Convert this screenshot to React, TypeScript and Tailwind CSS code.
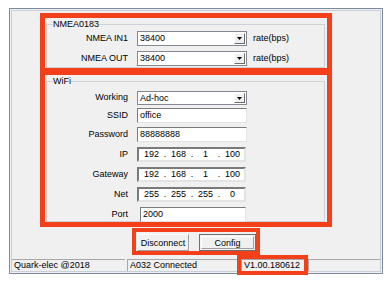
import React from 'react';

const red = 'border-[#f4401a]';

function Combo({ value, w = 'w-[110px]', h = 'h-[15px]' }: { value: string; w?: string; h?: string }) {
	return (
		<div className={`flex ${w} ${h} border border-[#828790] bg-white`}>
			<div className="flex-1 pl-[2px] leading-[13px]">{value}</div>
			<div className="m-px flex w-[11px] items-center justify-center border border-t-white border-l-white border-r-[#6d6d6d] border-b-[#6d6d6d] bg-[#f0f0f0]">
				<svg width="5" height="3" viewBox="0 0 5 3">
					<path d="M0 0h5L2.5 3z" fill="#000" />
				</svg>
			</div>
		</div>
	);
}

function TextBox({ value, w = 'w-[110px]' }: { value: string; w?: string }) {
	return (
		<div className={`${w} h-[15px] border border-t-[#7a7a7a] border-l-[#7a7a7a] border-r-[#e3e3e3] border-b-[#e3e3e3] bg-white pl-[2px] leading-[13px]`}>
			{value}
		</div>
	);
}

function IpBox({ parts }: { parts: string[] }) {
	return (
		<div className="flex h-[15px] w-[109px] border-2 border-t-[#7a7a7a] border-l-[#7a7a7a] border-r-[#e3e3e3] border-b-[#e3e3e3] bg-white pl-[2px] leading-[11px]">
			{parts.map((p, i) => (
				<React.Fragment key={i}>
					{i > 0 && <span className="w-[6px] text-center">.</span>}
					<span className="w-[21px] text-center">{p}</span>
				</React.Fragment>
			))}
		</div>
	);
}

function Row({ label, children, extra }: { label: string; children: React.ReactNode; extra?: React.ReactNode }) {
	return (
		<div className="flex items-center">
			<div className="w-[81px] text-right">{label}</div>
			<div className="ml-[9px]">{children}</div>
			{extra}
		</div>
	);
}

export default function App() {
	return (
		<div className="h-[289px] w-[389px] bg-white pl-[9px] pt-[8px] font-['Liberation_Sans',Arial,sans-serif] text-[9px] text-black">
			<div className="h-[266px] w-[374px] border border-[#7b8a9c] bg-[#f0f0f0] p-px">
				<div className="flex h-full flex-col border border-[#c9cfd6]">
					{/* NMEA0183 */}
					<div className={`ml-[28px] mt-[2px] h-[59px] w-[292px] border-[5px] border-b-4 ${red}`}>
						<fieldset className="ml-px mt-px h-[49px] w-[279px] border border-[#cfd3d7]">
							<legend className="ml-[6px] leading-[11px]">NMEA0183</legend>
							<div className="flex flex-col gap-[5px] pt-px">
								<Row label="NMEA IN1" extra={<span className="ml-[6px]">rate(bps)</span>}>
									<Combo value="38400" />
								</Row>
								<Row label="NMEA OUT" extra={<span className="ml-[6px]">rate(bps)</span>}>
									<Combo value="38400" />
								</Row>
							</div>
						</fieldset>
					</div>

					{/* WiFi */}
					<div className={`ml-[28px] h-[155px] w-[292px] border-[5px] border-t-[3px] ${red}`}>
						<fieldset className="ml-px mt-px h-[146px] w-[279px] border border-[#cfd3d7]">
							<legend className="ml-[6px] leading-[11px]">WiFi</legend>
							<div className="flex flex-col pt-[4px]">
								<Row label="Working">
									<Combo value="Ad-hoc" h="h-[14px]" />
								</Row>
								<div className="mt-[3px]">
									<Row label="SSID">
										<TextBox value="office" />
									</Row>
								</div>
								<div className="mt-[4px]">
									<Row label="Password">
										<TextBox value="88888888" />
									</Row>
								</div>
								<div className="mt-[5px]">
									<Row label="IP">
										<IpBox parts={['192', '168', '1', '100']} />
									</Row>
								</div>
								<div className="mt-[5px]">
									<Row label="Gateway">
										<IpBox parts={['192', '168', '1', '100']} />
									</Row>
								</div>
								<div className="mt-[5px]">
									<Row label="Net">
										<IpBox parts={['255', '255', '255', '0']} />
									</Row>
								</div>
								<div className="mt-[5px]">
									<Row label="Port">
										<div className="ml-[3px]">
											<TextBox value="2000" w="w-[106px]" />
										</div>
									</Row>
								</div>
							</div>
						</fieldset>
					</div>

					{/* buttons */}
					<div className={`ml-[120px] mt-px flex h-[27px] w-[128px] items-start border-4 ${red}`}>
						<button className="ml-px mt-[2px] h-[17px] w-[52px] border border-t-white border-l-white border-r-[#a0a0a0] border-b-[#a0a0a0] bg-[#f0f0f0] leading-[14px]">
							Disconnect
						</button>
						<button className="ml-[10px] mt-[2px] h-[17px] w-[57px] border border-[#6f6f6f] bg-[#f0f0f0] p-px">
							<div className="h-full border border-t-white border-l-white border-r-[#a0a0a0] border-b-[#a0a0a0] leading-[12px]">
								Config
							</div>
						</button>
					</div>

					{/* status bar */}
					<div className="mt-auto flex h-[12px] leading-[11px]">
						<div className="w-[113px] border-t border-[#a7a7a7] pl-[2px]">Quark-elec @2018</div>
						<div className="ml-[2px] w-[110px] border-l border-t border-[#a7a7a7] pl-[2px]">A032 Connected</div>
						<div className="ml-[4px] w-[63px] border-l border-t border-[#a7a7a7] bg-[#f0f0f0] pl-[2px] outline-4 outline-[#f4401a]">
							V1.00.180612
						</div>
						<div className="ml-[4px] flex-1 border-l border-t border-[#a7a7a7]" />
					</div>
				</div>
			</div>
		</div>
	);
}
